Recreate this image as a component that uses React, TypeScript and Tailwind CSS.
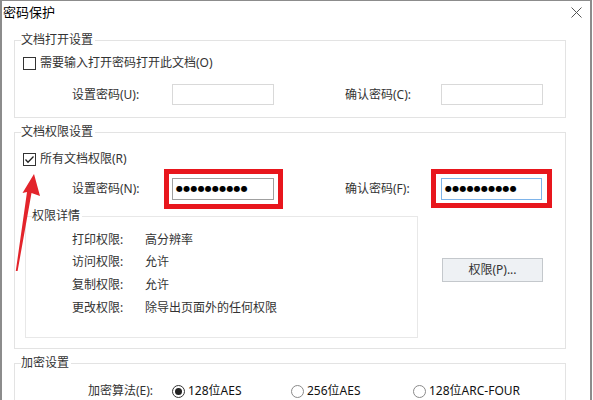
import React from "react";

const Check = ({ checked }: { checked?: boolean }) => (
  <span className="w-[13px] h-[13px] border border-[#333] bg-white flex items-center justify-center shrink-0">
    {checked && (
      <svg width="11" height="11" viewBox="0 0 11 11">
        <polyline points="1.5,5.5 4,8.2 9.5,2.5" fill="none" stroke="#222" strokeWidth="1.3" />
      </svg>
    )}
  </span>
);

const Radio = ({ checked }: { checked?: boolean }) => (
  <span
    className={
      "w-[13px] h-[13px] rounded-full border bg-white flex items-center justify-center shrink-0 " +
      (checked ? "border-[#333]" : "border-[#8a8a8a]")
    }
  >
    {checked && <span className="w-[7px] h-[7px] rounded-full bg-[#222]" />}
  </span>
);

const Dots = () => (
  <div className="flex items-center pl-[3px] h-full">
    {Array.from({ length: 10 }).map((_, i) => (
      <span key={i} className="w-[7.2px] text-center text-[8px] leading-[8px] text-black font-['DejaVu_Sans',sans-serif]">
        ●
      </span>
    ))}
  </div>
);

export default function App() {
  return (
    <div className="w-[593px] h-[400px] bg-white relative overflow-hidden font-['Noto_Sans','Noto_Sans_CJK_SC',sans-serif] text-[12px] text-[#333]">
      <div className="w-[592px] h-[400px] border-l-2 border-t border-r-2 border-[#8c8c8c] flex flex-col">
        {/* title bar */}
        <div className="h-[23px] flex items-start justify-between shrink-0">
          <span className="pl-[1px] pt-[3px] text-[13px] leading-[17px] text-black">密码保护</span>
          <svg className="mt-[6px] mr-[8px]" width="11" height="11" viewBox="0 0 11 11">
            <path d="M0.5 0.5 L10.5 10.5 M10.5 0.5 L0.5 10.5" stroke="#555" strokeWidth="1" fill="none" />
          </svg>
        </div>

        <div className="px-[12px] flex flex-col">
          {/* group 1 */}
          <fieldset className="mt-[8px] w-[552px] border border-[#e3e3e3] pb-[12px]">
            <legend className="ml-[6px] pr-[2px] leading-[16px] text-[#333]">文档打开设置</legend>
            <div className="mt-[7px] h-[16px] flex items-center pl-[8px] gap-[4px]">
              <Check />
              <span className="leading-[16px]">需要输入打开密码打开此文档(O)</span>
            </div>
            <div className="mt-[13px] h-[21px] flex items-center pl-[57px]">
              <span className="w-[100px]">设置密码(U):</span>
              <div className="w-[102px] h-[21px] border border-[#d9d9d9] bg-white" />
              <span className="ml-[71px] w-[96px]">确认密码(C):</span>
              <div className="w-[102px] h-[21px] border border-[#d9d9d9] bg-white" />
            </div>
          </fieldset>

          {/* group 2 */}
          <fieldset className="mt-[6px] w-[552px] border border-[#e3e3e3] pb-[10px]">
            <legend className="ml-[6px] pr-[2px] leading-[16px] text-[#333]">文档权限设置</legend>
            <div className="mt-[11px] h-[16px] flex items-center pl-[8px] gap-[4px]">
              <Check checked />
              <span className="leading-[16px]">所有文档权限(R)</span>
            </div>
            <div className="mt-[11px] h-[22px] flex items-center pl-[57px]">
              <span className="w-[100px]">设置密码(N):</span>
              <div className="relative w-[102px] h-[22px] border border-[#a0a0a0] bg-white">
                <Dots />
                <div className="absolute left-[-9px] right-[-10px] top-[-10px] bottom-[-10px] border-[5px] border-[#e8161d]" />
              </div>
              <span className="ml-[71px] w-[96px]">确认密码(F):</span>
              <div className="relative w-[101px] h-[22px] border border-[#7eb4ea] bg-white">
                <Dots />
                <div className="absolute left-[-11px] right-[-11px] top-[-10px] bottom-[-9px] border-[5px] border-[#e8161d]" />
              </div>
            </div>

            <div className="mt-[8px] flex items-start">
              <fieldset className="ml-[10px] w-[393px] border border-[#e8e8e8] pb-[18px]">
                <legend className="ml-[6px] pr-[2px] leading-[16px] text-[#333]">权限详情</legend>
                <div className="pl-[46px] flex flex-col">
                  <div className="mt-[5px] h-[22px] flex items-center">
                    <span className="w-[73px]">打印权限:</span>
                    <span>高分辨率</span>
                  </div>
                  <div className="h-[22px] flex items-center">
                    <span className="w-[73px]">访问权限:</span>
                    <span>允许</span>
                  </div>
                  <div className="h-[23px] flex items-center">
                    <span className="w-[73px]">复制权限:</span>
                    <span>允许</span>
                  </div>
                  <div className="h-[23px] flex items-center">
                    <span className="w-[73px]">更改权限:</span>
                    <span>除导出页面外的任何权限</span>
                  </div>
                </div>
              </fieldset>
              <button className="ml-[24px] mt-[50px] w-[101px] h-[24px] border border-[#c4c8cc] bg-[#eef1f4] text-[#333] text-[12px] leading-[22px]">
                权限(P)...
              </button>
            </div>
          </fieldset>

          {/* group 3 */}
          <fieldset className="mt-[6px] w-[552px] h-[80px] border border-[#e3e3e3]">
            <legend className="ml-[6px] pr-[2px] leading-[16px] text-[#333]">加密设置</legend>
            <div className="mt-[12px] h-[16px] flex items-center pl-[73px]">
              <span className="w-[84px]">加密算法(E):</span>
              <div className="w-[119px] flex items-center gap-[3px]">
                <Radio checked />
                <span className="text-[#111]">128位AES</span>
              </div>
              <div className="w-[122px] flex items-center gap-[3px]">
                <Radio />
                <span className="text-[#111]">256位AES</span>
              </div>
              <div className="flex items-center gap-[3px]">
                <Radio />
                <span className="text-[#111]">128位ARC-FOUR</span>
              </div>
            </div>
          </fieldset>
        </div>
      </div>

      {/* red annotation arrow */}
      <svg className="absolute left-0 top-0 pointer-events-none" width="60" height="300" viewBox="0 0 60 300">
        <polygon
          points="34,174 40,196 31.5,193 17.6,271 15.8,271 27,192 22.5,193"
          fill="#e3242b"
        />
      </svg>
    </div>
  );
}
